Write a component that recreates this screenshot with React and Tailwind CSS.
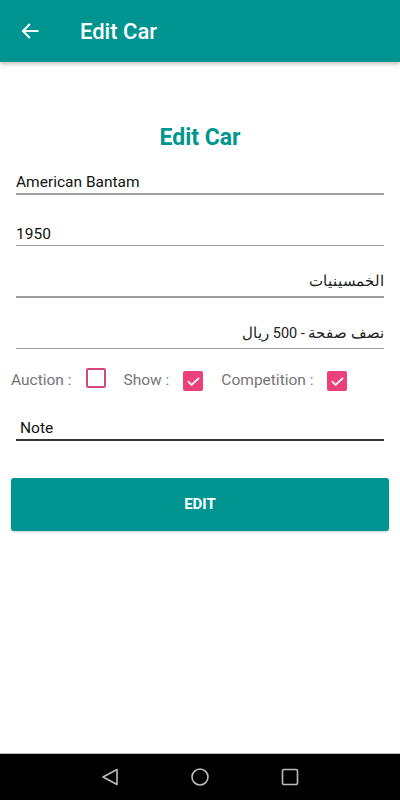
import React, { useState } from 'react';

const fields = [
  { value: 'American Bantam', rtl: false },
  { value: '1950', rtl: false },
  { value: 'الخمسينيات', rtl: true },
  { value: 'نصف صفحة - 500 ريال', rtl: true },
];

function Check({ checked, onClick }) {
  return checked ? (
    <button onClick={onClick} className="w-[20px] h-[20px] rounded-[2px] bg-[#ec407a] flex items-center justify-center">
      <svg width="15" height="15" viewBox="0 0 24 24" fill="none" stroke="white" strokeWidth="3" strokeLinecap="round" strokeLinejoin="round">
        <path d="M4 12.5l5 5L20 7" />
      </svg>
    </button>
  ) : (
    <button onClick={onClick} className="w-[20px] h-[20px] rounded-[2px] border-2 border-[#d6487a]" />
  );
}

export default function App() {
  const [checks, setChecks] = useState({ auction: false, show: true, competition: true });
  const toggle = (k) => setChecks({ ...checks, [k]: !checks[k] });

  return (
    <div className="w-[400px] h-[800px] flex flex-col bg-white" style={{ fontFamily: 'Roboto, "Noto Sans", sans-serif' }}>
      <div className="h-[62px] bg-[#009490] flex items-center shadow-[0_2px_4px_rgba(0,0,0,0.25)] relative z-10">
        <svg className="ml-[20px]" width="20" height="20" viewBox="0 0 24 24" fill="none" stroke="white" strokeWidth="2.4" strokeLinecap="square">
          <path d="M21 12H4M11 4.5L3.5 12l7.5 7.5" />
        </svg>
        <span className="ml-[40px] text-white text-[22px] font-medium">Edit Car</span>
      </div>

      <div className="flex-1 px-4">
        <h1 className="mt-[62px] text-center text-[#00968f] text-[23px] font-bold leading-[28px]">Edit Car</h1>

        <div className="mt-[19px] flex flex-col gap-[28px]">
          {fields.map((f, i) => (
            <div key={i}>
              {f.rtl ? (
                <div dir="rtl" className="h-[22px] leading-[16px] text-[14.5px] text-[#222]">
                  {f.value}
                </div>
              ) : (
                <div className="h-[22px] leading-[22px] text-[15.5px] text-[#111]">{f.value}</div>
              )}
              <div className="h-[1.5px] bg-[#9e9e9e]" />
            </div>
          ))}
        </div>

        <div className="mt-[22px] -ml-[5px] flex items-center h-[20px] text-[15.5px] text-[#757575]">
          <span>Auction :</span>
          <span className="ml-[14px]"><Check checked={checks.auction} onClick={() => toggle('auction')} /></span>
          <span className="ml-[18px]">Show :</span>
          <span className="ml-[14px]"><Check checked={checks.show} onClick={() => toggle('show')} /></span>
          <span className="ml-[18px]">Competition :</span>
          <span className="ml-[14px]"><Check checked={checks.competition} onClick={() => toggle('competition')} /></span>
        </div>

        <div className="mt-[26px]">
          <div className="pl-[4px] h-[22px] leading-[22px] text-[15.5px] text-[#111]">Note</div>
          <div className="h-[1.5px] bg-[#333]" />
        </div>

        <button className="mt-[37px] -mx-[5px] w-[378px] h-[53px] rounded-[3px] bg-[#009490] text-white font-bold text-[15px] shadow-[0_1px_2px_rgba(0,0,0,0.2)]">
          EDIT
        </button>
      </div>

      <div className="h-[47px] bg-black border-t border-[#bdbdbd] flex items-center justify-center gap-[70px]">
        <svg width="20" height="20" viewBox="0 0 20 20" fill="none" stroke="#bdbdbd" strokeWidth="1.6" strokeLinejoin="round">
          <path d="M17 2.5L3 10l14 7.5z" />
        </svg>
        <svg width="20" height="20" viewBox="0 0 20 20" fill="none" stroke="#bdbdbd" strokeWidth="1.6">
          <circle cx="10" cy="10" r="8" />
        </svg>
        <svg width="20" height="20" viewBox="0 0 20 20" fill="none" stroke="#bdbdbd" strokeWidth="1.6">
          <rect x="2.5" y="2.5" width="15" height="15" rx="1.5" />
        </svg>
      </div>
    </div>
  );
}
